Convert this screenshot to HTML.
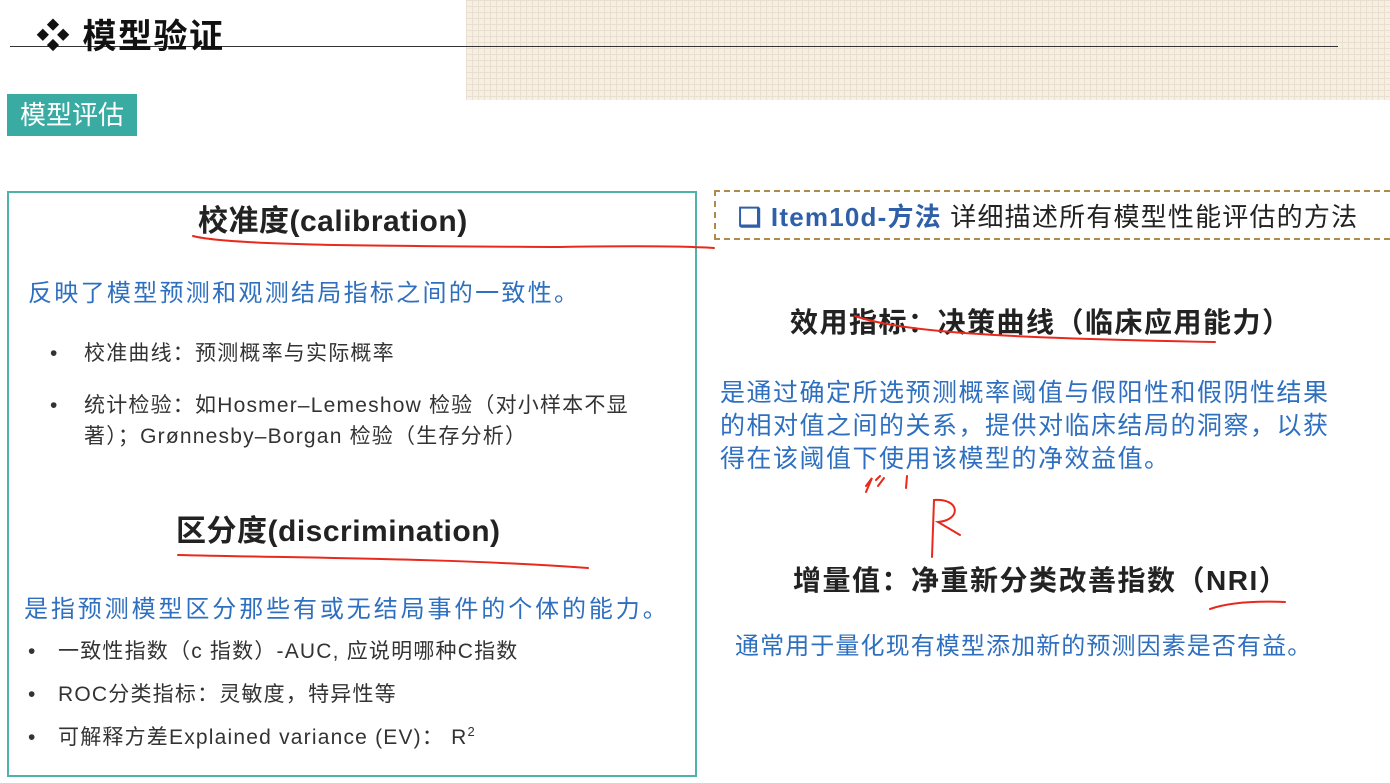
<!DOCTYPE html>
<html><head><meta charset="utf-8"><style>
body{margin:0;width:1390px;height:783px;background:#fff;position:relative;overflow:hidden;font-family:"Liberation Sans","Noto Sans CJK SC",sans-serif;}
.a{position:absolute;white-space:nowrap;}
.grid{position:absolute;left:466px;top:0;width:924px;height:100px;background-color:#f7efe1;
background-image:linear-gradient(#e9dfd0 1px,transparent 1px),linear-gradient(90deg,#e9dfd0 1px,transparent 1px);background-size:6px 6px;}
.blue{color:#2e6fbf;}
.b{font-weight:bold;color:#222;}
.bl{font-size:21px;color:#333;letter-spacing:1.2px;line-height:31px}
sup{line-height:0;font-size:13px}
</style></head><body>
<div class="grid"></div>
<div class="a" style="left:10px;top:46px;width:1328px;height:1px;background:#333"></div>
<div class="a b" style="left:36px;top:9px;font-size:34px;color:#111;letter-spacing:1.5px">❖ 模型验证</div>
<div class="a" style="left:7px;top:94px;width:130px;height:42px;background:#3aaba3;color:#fff;font-size:26px;line-height:42px;text-align:center">模型评估</div>

<div class="a" style="left:7px;top:191px;width:686px;height:582px;border:2px solid #4bb3aa"></div>
<div class="a b" style="left:198px;top:196px;font-size:30px;letter-spacing:0.5px">校准度(calibration)</div>
<div class="a blue" style="left:28px;top:273px;font-size:24px;letter-spacing:2.3px">反映了模型预测和观测结局指标之间的一致性。</div>
<div class="a bl" style="left:50px;top:338px">•</div><div class="a bl" style="left:84px;top:338px">校准曲线：预测概率与实际概率</div>
<div class="a bl" style="left:50px;top:390px">•</div><div class="a bl" style="left:84px;top:390px">统计检验：如Hosmer–Lemeshow 检验（对小样本不显<br>著）；Grønnesby–Borgan 检验（生存分析）</div>
<div class="a b" style="left:176px;top:506px;font-size:30px;letter-spacing:0.5px">区分度(discrimination)</div>
<div class="a blue" style="left:24px;top:589px;font-size:24px;letter-spacing:2.9px">是指预测模型区分那些有或无结局事件的个体的能力。</div>
<div class="a bl" style="left:28px;top:636px">•</div><div class="a bl" style="left:58px;top:636px">一致性指数（c 指数）-AUC, 应说明哪种C指数</div>
<div class="a bl" style="left:28px;top:679px">•</div><div class="a bl" style="left:58px;top:679px">ROC分类指标：灵敏度，特异性等</div>
<div class="a bl" style="left:28px;top:722px">•</div><div class="a bl" style="left:58px;top:722px">可解释方差Explained variance (EV)： R<sup>2</sup></div>

<div class="a" style="left:714px;top:190px;width:674px;height:46px;border:2px dashed #b08a4a;border-right:none"></div>
<div class="a" style="left:738px;top:197px;font-size:26px;color:#222;letter-spacing:1.2px"><span style="color:#2e5fa8;font-weight:bold">❑ Item10d-方法</span> 详细描述所有模型性能评估的方法</div>

<div class="a b" style="left:790px;top:301px;font-size:28px;letter-spacing:1.5px">效用指标：决策曲线（临床应用能力）</div>
<div class="a blue" style="left:720px;top:377px;font-size:25px;line-height:33px;letter-spacing:1.5px">是通过确定所选预测概率阈值与假阳性和假阴性结果<br>的相对值之间的关系，提供对临床结局的洞察，以获<br>得在该阈值下使用该模型的净效益值。</div>
<div class="a b" style="left:793px;top:559px;font-size:28px;letter-spacing:1.5px">增量值：净重新分类改善指数（NRI）</div>
<div class="a blue" style="left:735px;top:626px;font-size:24px;letter-spacing:1.1px">通常用于量化现有模型添加新的预测因素是否有益。</div>

<svg class="a" style="left:0;top:0" width="1390" height="783">
<g fill="none" stroke="#e8291c" stroke-width="2" stroke-linecap="round">
<path d="M193 236 C230 246 400 246 560 247 C620 246 680 246 714 248"/>
<path d="M178 555 C300 558 450 558 588 568"/>
<path d="M855 316 C900 332 1000 338 1215 342"/>
<path d="M1210 609 C1230 602 1260 601 1285 602"/>
<path d="M866 486 L872 478 L866 492 M876 480 L880 476 M878 486 L884 478 M907 476 L906 488"/>
<path d="M932 557 L934 500 C960 498 962 520 938 522 L960 535"/>
</g></svg>
</body></html>
